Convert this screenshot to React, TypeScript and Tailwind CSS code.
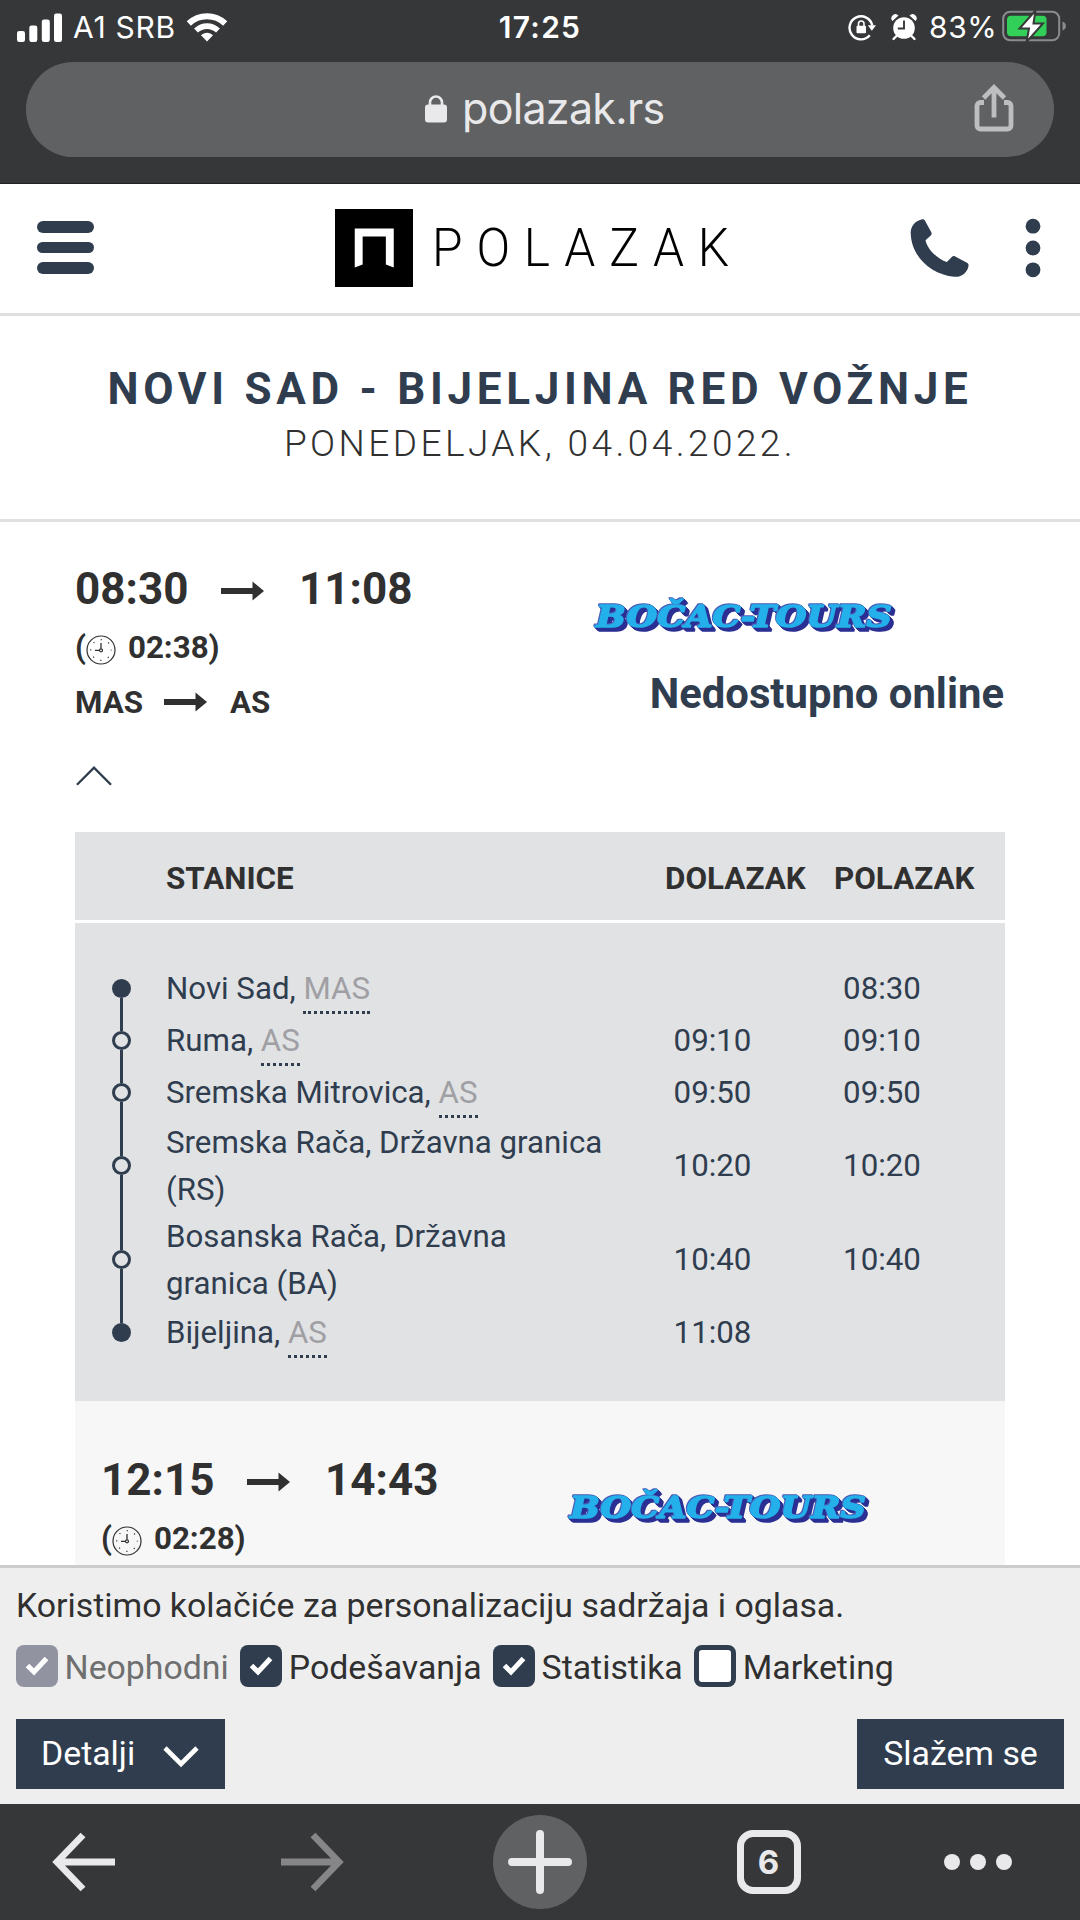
import React from "react";

const NAVY = "#2f3d4f";

function StatusBar() {
  return (
    <div className="flex h-[54px] items-center font-[Inter] text-white">
      <div className="flex w-[360px] items-center pl-[17px]">
        <svg className="h-[29px] w-[46px]" viewBox="0 0 46 29" fill="#fff">
          <rect x="0" y="18" width="8" height="11" rx="2.2" />
          <rect x="12.3" y="12.5" width="8" height="16.5" rx="2.2" />
          <rect x="24.8" y="6.5" width="8" height="22.5" rx="2.2" />
          <rect x="37" y="0.5" width="8" height="28.5" rx="2.2" />
        </svg>
        <span className="ml-[10px] w-[104px] text-[30px] leading-none tracking-[0.7px] whitespace-nowrap">A1 SRB</span>
        <svg className="ml-[9px] h-[30px] w-[42px]" viewBox="0 0 42 30">
          <path d="M2.8 11.5C13 1.8 29 1.8 39.200 11.500" fill="none" stroke="#fff" strokeWidth="6" />
          <path d="M10 18.500C16.500 12.600 25.500 12.600 32 18.500" fill="none" stroke="#fff" strokeWidth="5.600" />
          <path d="M15 23.200C18.500 19.800 23.500 19.800 27 23.200L21 29.500Z" fill="#fff" />
        </svg>
      </div>
      <div className="w-[360px] text-center text-[30px] leading-none font-semibold tracking-[1.3px]">17:25</div>
      <div className="flex w-[360px] items-center pl-[128px]">
        <svg className="h-[28px] w-[28px]" viewBox="0 0 28 28">
          <path d="M21.800 22.300A11.500 11.500 0 1 1 24.300 12.500" fill="none" stroke="#fff" strokeWidth="2.400" />
          <path d="M19.800 12.300h8.200l-4.100 5.400z" fill="#fff" />
          <rect x="8.500" y="12.800" width="9.500" height="7.500" rx="1" fill="#fff" />
          <path d="M10.500 13v-2.300a2.750 2.750 0 0 1 5.500 0V13" fill="none" stroke="#fff" strokeWidth="1.600" />
        </svg>
        <svg className="ml-[15px] h-[28px] w-[26px]" viewBox="0 0 26 28">
          <circle cx="13" cy="15" r="10.800" fill="#fff" />
          <path d="M1.500 8a4 4 0 0 1 6-5.500zM24.500 8a4 4 0 0 0-6-5.500z" fill="#fff" />
          <path d="M5.500 23l-3 3M20.500 23l3 3" stroke="#fff" strokeWidth="2.400" strokeLinecap="round" />
          <path d="M13 7.500V15.500H6.800" fill="none" stroke="#37383a" strokeWidth="1.900" />
        </svg>
        <span className="ml-[12px] w-[69px] text-[30px] leading-none tracking-[0.6px]">83%</span>
        <svg className="ml-[4px] h-[34px] w-[66px] shrink-0" viewBox="0 0 66 34">
          <rect x="1.200" y="1.700" width="56" height="28.600" rx="7" fill="none" stroke="#8b8c8e" strokeWidth="2" />
          <path d="M60.500 11.500c4.500 1 4.500 8 0 9z" fill="#8b8c8e" />
          <rect x="5" y="5.800" width="39.500" height="20.400" rx="4" fill="#32d058" />
          <path d="M33.500 0.500L17.500 18.500h9.500L24.500 32L41 13.500h-9.500z" fill="#fff" stroke="#37383a" strokeWidth="2" />
        </svg>
      </div>
    </div>
  );
}

function BrowserHeader() {
  return (
    <header className="h-[184px] shrink-0 border-b border-[#222] bg-[#363739]">
      <StatusBar />
      <div className="mx-[26px] mt-[8px] flex h-[95px] items-center rounded-full bg-[#606163] font-[Inter]">
        <svg className="ml-[399px] h-[28px] w-[22px] -translate-y-px" viewBox="0 0 22 28">
          <rect x="0" y="9.500" width="22" height="18" rx="3" fill="#e9e9eb" />
          <path d="M5 11V7.500a6 6 0 0 1 12 0V11" fill="none" stroke="#e9e9eb" strokeWidth="2.600" />
        </svg>
        <span className="ml-[15px] w-[205px] pb-[3px] text-[43px] leading-none tracking-[-0.7px] whitespace-nowrap text-[#e9e9eb]">polazak.rs</span>
        <svg className="mb-[4px] ml-[307px] h-[50px] w-[40px]" viewBox="0 0 40 50" fill="none" stroke="#bdbec0" strokeWidth="4.800">
          <path d="M10 19.500H6.500a3.500 3.500 0 0 0-3.500 3.500V42.500a3.500 3.500 0 0 0 3.500 3.500H33.500a3.500 3.500 0 0 0 3.500-3.500V23a3.500 3.500 0 0 0-3.500-3.500H30" />
          <path d="M20 34.500V5M9.500 15L20 4.500L30.500 15" />
        </svg>
      </div>
    </header>
  );
}

function SiteHeader() {
  return (
    <div className="flex h-[132px] shrink-0 items-center border-b-[3px] border-[#e0e0e0] bg-white pb-[2px]">
      <div className="ml-[37px] flex w-[57px] flex-col gap-[9px]">
        <div className="h-[11.5px] rounded-full bg-[#2f3d4f]" />
        <div className="h-[11.5px] rounded-full bg-[#2f3d4f]" />
        <div className="h-[11.5px] rounded-full bg-[#2f3d4f]" />
      </div>
      <svg className="ml-[241px] h-[78px] w-[78px]" viewBox="0 0 79 78" preserveAspectRatio="none">
        <rect width="79" height="78" fill="#000" />
        <path d="M20 58.500V19.500H59.500V58.500L51.500 55.500V27.500H28V55.500Z" fill="#fff" />
      </svg>
      <div className="ml-[19px] w-[478px] pt-px">
        <span className="inline-block origin-left scale-x-[0.92] font-[Roboto] text-[54px] leading-[78px] font-light tracking-[15px] text-black">POLAZAK</span>
      </div>
      <svg className="h-[60px] w-[60px]" viewBox="0 0 60 60" fill={NAVY}>
        <path d="M11.500 1.500C12.800.9 14.200 1.400 14.900 2.600L21.300 14.200C21.900 15.400 21.700 16.700 20.800 17.600L15.500 22.200C17 30.500 27 41 36.800 44L41.800 38.900C42.700 38 44 37.800 45.200 38.400L57 44.800C58.200 45.500 58.800 46.700 58.500 48C57.500 54.500 51.500 59.500 44.500 58.800C20 56.500 1.500 38 .7 15.500C.4 8.600 5 2.900 11.500 1.500Z" />
      </svg>
      <svg className="ml-[55px] h-[60px] w-[16px]" viewBox="0 0 16 60" fill={NAVY}>
        <circle cx="8" cy="8.200" r="7.400" />
        <circle cx="8" cy="30" r="7.400" />
        <circle cx="8" cy="51.800" r="7.400" />
      </svg>
    </div>
  );
}

function Arrow() {
  return (
    <svg className="h-[20px] w-[43px] shrink-0" viewBox="0 0 43 20" fill="#303030">
      <path d="M0 7H31.500V0.500L43 10L31.500 19.500V13H0Z" />
    </svg>
  );
}

function Clock() {
  return (
    <svg className="h-[30px] w-[30px] shrink-0" viewBox="0 0 30 30" fill="none" stroke="#303030">
      <circle cx="15" cy="15" r="14" strokeWidth="1.200" />
      <circle cx="15" cy="15" r="10.300" strokeWidth="1.200" strokeDasharray="1.200 6.890" strokeDashoffset="0.600" />
      <circle cx="15" cy="15.300" r="1.500" strokeWidth="1.200" />
      <path d="M15 13.800V8M13.500 15.300H9" strokeWidth="1.300" />
    </svg>
  );
}

function CarrierLogo() {
  return (
    <svg
      className="h-[40px] w-[304px] overflow-visible drop-shadow-[1px_1px_0_#2b2f93]"
      viewBox="0 0 304 40"
    >
      <g className="drop-shadow-[2px_2px_0_#2b2f93]">
        <g className="drop-shadow-[1px_1px_0_#2b2f93]">
          <g className="drop-shadow-[-0.6px_-0.6px_0_#4a5cb8]">
            <text
              x={2}
              y={31.5}
              textLength={296}
              lengthAdjust="spacingAndGlyphs"
              fontFamily="'DejaVu Serif', serif"
              fontWeight={700}
              fontStyle="italic"
              fontSize={30.5}
              strokeLinejoin="round"
              fill="#24b0ea"
              stroke="#24b0ea"
              strokeWidth={1.5}
            >
              BOČAC-TOURS
            </text>
          </g>
        </g>
      </g>
    </svg>
  );
}

function Times({ from, to, duration }: { from: string; to: string; duration: string }) {
  return (
    <>
      <div className="flex h-[56px] items-center text-[44px] leading-[56px] font-bold">
        <span className="w-[146px]">{from}</span>
        <div className="pt-[3px]">
          <Arrow />
        </div>
        <span className="ml-[35px]">{to}</span>
      </div>
      <div className="mt-[5px] flex h-[52px] items-center text-[31.3px] font-bold">
        <span>(</span>
        <div className="pt-[3px]">
          <Clock />
        </div>
        <span className="ml-[12px]">{duration})</span>
      </div>
    </>
  );
}

type Stop = { lines: string[]; abbr?: string; arrive?: string; depart?: string; end?: boolean };

const stops: Stop[] = [
  { lines: ["Novi Sad,"], abbr: "MAS", depart: "08:30", end: true },
  { lines: ["Ruma,"], abbr: "AS", arrive: "09:10", depart: "09:10" },
  { lines: ["Sremska Mitrovica,"], abbr: "AS", arrive: "09:50", depart: "09:50" },
  { lines: ["Sremska Rača, Državna granica", "(RS)"], arrive: "10:20", depart: "10:20" },
  { lines: ["Bosanska Rača, Državna", "granica (BA)"], arrive: "10:40", depart: "10:40" },
  { lines: ["Bijeljina,"], abbr: "AS", arrive: "11:08", end: true },
];

function StopRow({ stop, first, last }: { stop: Stop; first: boolean; last: boolean }) {
  return (
    <div className={stop.lines.length > 1 ? "flex h-[94px] items-center" : "flex h-[52.2px] items-center"}>
      <div className="ml-[37px] flex w-[19px] flex-col items-center self-stretch">
        <div className={first ? "w-[2.5px] flex-1" : "w-[2.5px] flex-1 bg-[#2f3d4f]"} />
        <div className={stop.end ? "size-[19px] rounded-full bg-[#2f3d4f]" : "size-[19px] rounded-full border-[3px] border-[#2f3d4f]"} />
        <div className={last ? "w-[2.5px] flex-1" : "w-[2.5px] flex-1 bg-[#2f3d4f]"} />
      </div>
      <div className={stop.abbr ? "ml-[35px] w-[476px] pt-[2px] leading-[47px] whitespace-nowrap" : "ml-[35px] w-[476px] leading-[47px] whitespace-nowrap"}>
        {stop.lines.map((l) => (
          <div key={l}>
            {l}
            {stop.abbr && (
              <>
                {" "}
                <span className="inline-block h-[49px] border-b-[3px] border-dotted border-[#2f3d4f] leading-[47px] text-[#a0a0a4]">{stop.abbr}</span>
              </>
            )}
          </div>
        ))}
      </div>
      <div className="w-[141px] pt-[2px] text-center">{stop.arrive}</div>
      <div className="ml-[29px] w-[140px] pt-[2px] text-center">{stop.depart}</div>
    </div>
  );
}

function Check({ label, state }: { label: string; state: "on" | "off" | "disabled" }) {
  const box =
    state === "on"
      ? "flex size-[41.500px] items-center justify-center rounded-[8px] bg-[#2f3d4f]"
      : state === "off"
        ? "size-[41.500px] rounded-[8px] border-[5px] border-[#2f3d4f] bg-white"
        : "flex size-[41.500px] items-center justify-center rounded-[8px] bg-[#9193a0]";
  return (
    <div className="flex items-center gap-[7px]">
      <div className={box}>
        {state !== "off" && (
          <svg className="h-[20px] w-[24px]" viewBox="0 0 24 20" fill="none" stroke="#fff" strokeWidth="5">
            <path d="M2.500 9.500L9 16L21.500 2.500" />
          </svg>
        )}
      </div>
      <span className={state === "disabled" ? "pt-[5px] text-[#6f6f6f]" : "pt-[5px]"}>{label}</span>
    </div>
  );
}

export default function App() {
  return (
    <div className="flex h-[1920px] w-[1080px] flex-col overflow-hidden bg-white font-[Roboto] text-[#303030]">
      <BrowserHeader />
      <SiteHeader />

      <div className="flex h-[206px] shrink-0 flex-col items-center border-b-[3px] border-[#e0e0e0] pt-[45px]">
        <h1 className="text-[44px] leading-[56px] font-bold tracking-[4.7px] whitespace-nowrap text-[#2f3d4f]">NOVI SAD - BIJELJINA RED VOŽNJE</h1>
        <div className="text-[37px] leading-[54px] font-light tracking-[3.43px] whitespace-nowrap">PONEDELJAK, 04.04.2022.</div>
      </div>

      <main className="h-[1043px] shrink-0 overflow-hidden px-[75px]">
        <section className="flex h-[310px] justify-between pt-[39px]">
          <div>
            <Times from="08:30" to="11:08" duration="02:38" />
            <div className="mt-px flex h-[56px] items-center text-[31.3px] font-bold">
              <span className="w-[89px]">MAS</span>
              <div className="pb-[2px]">
                <Arrow />
              </div>
              <span className="ml-[23px]">AS</span>
            </div>
            <svg className="mt-[34px] ml-[1px] h-[22px] w-[36px]" viewBox="0 0 37 22" fill="none" stroke={NAVY} strokeWidth="2.400">
              <path d="M1 20L18.500 2.500L36 20" />
            </svg>
          </div>
          <div className="flex flex-col items-end">
            <div className="mt-[34px] mr-[107px] h-[40px]">
              <CarrierLogo />
            </div>
            <div className="mt-[31px] mr-px text-[41.8px] leading-[56px] font-bold text-[#2f3d4f]">Nedostupno online</div>
          </div>
        </section>

        <section className="h-[569px] bg-[#e1e2e4]">
          <div className="flex h-[91px] items-center border-b-[3px] border-white pt-[6px] text-[31.4px] font-bold">
            <span className="ml-[91px] w-[499px]">STANICE</span>
            <span className="w-[169px]">DOLAZAK</span>
            <span>POLAZAK</span>
          </div>
          <div className="pt-[39px] text-[31.25px] text-[#2f3d4f]">
            {stops.map((s, i) => (
              <StopRow key={s.lines[0]} stop={s} first={i === 0} last={i === stops.length - 1} />
            ))}
          </div>
        </section>

        <section className="flex h-[164px] justify-between bg-[#f7f7f7] px-[26px] pt-[51px]">
          <div>
            <Times from="12:15" to="14:43" duration="02:28" />
          </div>
          <div className="mt-[34px] mr-[107px] h-[40px]">
            <CarrierLogo />
          </div>
        </section>
      </main>

      <section className="h-[239px] shrink-0 border-t-[3px] border-[#cccccc] bg-[#eeeeee] px-[16px] text-[33.85px] text-[#303030]">
        <p className="mt-[14px] h-[48px] leading-[48px] whitespace-nowrap">Koristimo kolačiće za personalizaciju sadržaja i oglasa.</p>
        <div className="mt-[15px] flex h-[42px] items-center gap-[11.5px]">
          <Check label="Neophodni" state="disabled" />
          <Check label="Podešavanja" state="on" />
          <Check label="Statistika" state="on" />
          <Check label="Marketing" state="off" />
        </div>
        <div className="mt-[32px] flex h-[70px] justify-between text-white">
          <button className="flex h-[70px] w-[209px] items-center bg-[#2f3d4f] pl-[25px]">
            <span className="w-[122px] pt-px text-left">Detalji</span>
            <svg className="mt-[6px] h-[22px] w-[36px]" viewBox="0 0 36 22" fill="none" stroke="#fff" strokeWidth="4.600">
              <path d="M2 2L18 18L34 2" />
            </svg>
          </button>
          <button className="h-[70px] w-[207px] bg-[#2f3d4f] pt-px text-center">Slažem se</button>
        </div>
      </section>

      <nav className="flex h-[116px] shrink-0 items-center bg-[#363739]">
        <svg className="ml-[51px] h-[60px] w-[65px]" viewBox="0 0 65 60" fill="none" stroke="#e9e9eb" strokeWidth="6.800">
          <path d="M64 30H6M32 3L6 30L32 57" />
        </svg>
        <svg className="ml-[164px] h-[60px] w-[65px]" viewBox="0 0 65 60" fill="none" stroke="#868688" strokeWidth="6.800">
          <path d="M1 30H59M33 3L59 30L33 57" />
        </svg>
        <div className="ml-[148px] flex size-[94px] items-center justify-center rounded-full bg-[#606163]">
          <svg className="size-[64px]" viewBox="0 0 64 64" stroke="#e9e9eb" strokeWidth="8" strokeLinecap="round">
            <path d="M32 4V60M4 32H60" />
          </svg>
        </div>
        <div className="ml-[150px] flex size-[64px] items-center justify-center rounded-[16px] border-[7px] border-[#e9e9eb] pr-px font-[Inter] text-[33px] leading-none font-bold text-[#e9e9eb]">6</div>
        <div className="ml-[143px] flex gap-[10px]">
          <div className="size-[16px] rounded-full bg-[#e9e9eb]" />
          <div className="size-[16px] rounded-full bg-[#e9e9eb]" />
          <div className="size-[16px] rounded-full bg-[#e9e9eb]" />
        </div>
      </nav>
    </div>
  );
}
